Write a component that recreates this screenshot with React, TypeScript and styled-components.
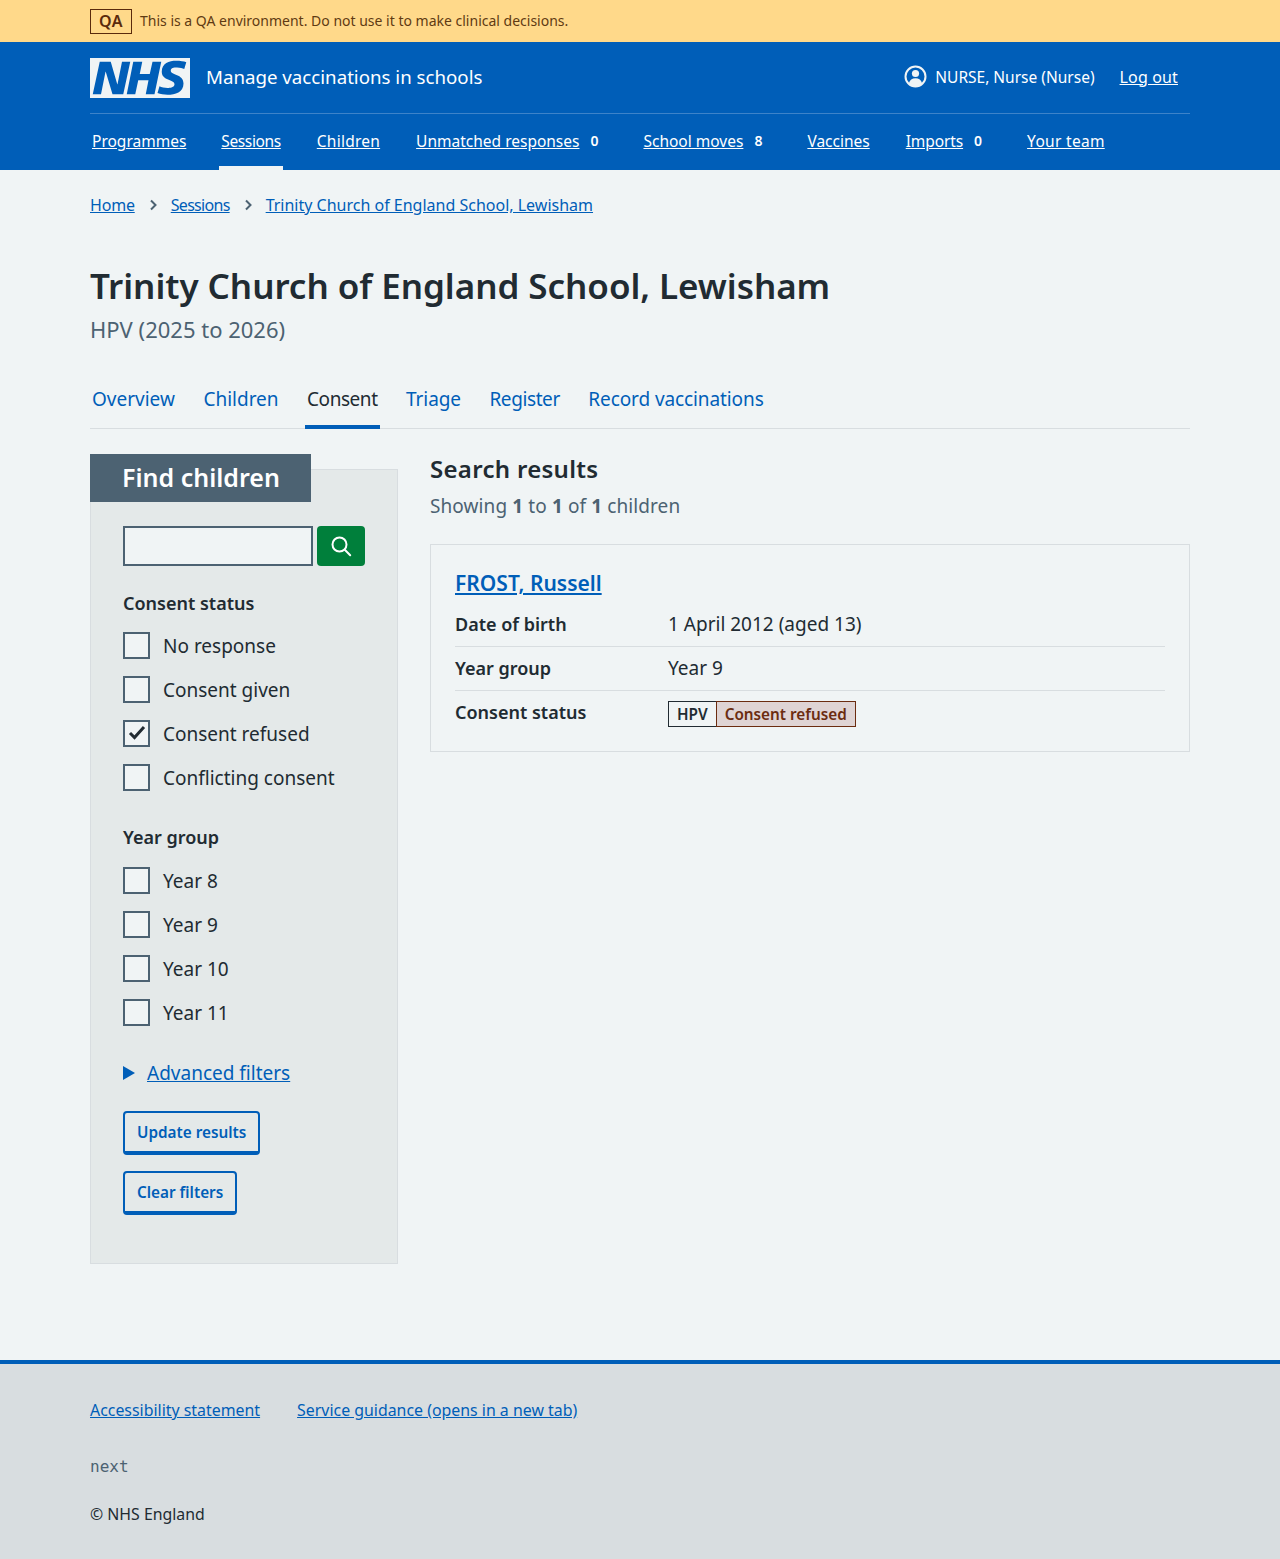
import React from "react";
import styled, { createGlobalStyle } from "styled-components";

const Global = createGlobalStyle`
  html, body { margin: 0; padding: 0; background: #f0f4f5; }
  body { font-family: "Noto Sans", Arial, sans-serif; color: #212b32; font-size: 19px; line-height: 28px; -webkit-font-smoothing: antialiased; }
  * { box-sizing: border-box; }
  a { color: #005eb8; }
`;

const Container = styled.div`
  width: 1100px;
  margin: 0 auto;
`;

const QaBar = styled.div`
  height: 42px;
  background: #ffd98a;
  color: #5f3b13;
`;
const QaInner = styled(Container)`
  display: flex;
  align-items: center;
  gap: 8px;
  height: 42px;
  font-size: 14px;
`;
const QaTag = styled.strong`
  display: block;
  width: 42px;
  height: 25px;
  border: 1px solid #5a2a0c;
  text-align: center;
  line-height: 23px;
  font-size: 16px;
  font-weight: 600;
  letter-spacing: 0.5px;
  color: #5a2a0c;
`;

const Header = styled.header`
  background: #005eb8;
  height: 128px;
  color: #fff;
`;
const HeaderTop = styled(Container)`
  display: flex;
  align-items: center;
  height: 72px;
  border-bottom: 1px solid #3d83c9;
`;
const Logo = styled.svg`
  display: block;
  width: 100px;
  height: 40px;
`;
const ServiceName = styled.span`
  margin-left: 16px;
  padding-bottom: 2px;
  font-size: 18.7px;
`;
const Account = styled.div`
  margin-left: auto;
  display: flex;
  align-items: center;
  padding-right: 12px;
  padding-bottom: 2px;
  font-size: 16px;
`;
const AccountName = styled.span`
  margin-left: 8px;
  margin-right: 25px;
  font-size: 15.5px;
`;
const HeaderLink = styled.a<{ $track?: number }>`
  color: #fff;
  letter-spacing: ${(p) => p.$track ?? 0}px;
`;
const Nav = styled(Container)`
  display: flex;
  height: 56px;
`;
const NavItem = styled.div<{ $active?: boolean; $gap?: number }>`
  display: flex;
  align-items: center;
  height: 56px;
  padding: 2px 2px 0;
  margin-right: ${(p) => p.$gap ?? 32}px;
  font-size: 15.5px;
  border-bottom: 4px solid ${(p) => (p.$active ? "#f0f4f5" : "transparent")};
`;
const NavCount = styled.span`
  margin-left: 11px;
  width: 8px;
  font-size: 14px;
  font-weight: 600;
`;

const Main = styled(Container)`
  height: 1190px;
  padding-top: 23px;
`;
const Breadcrumbs = styled.nav`
  display: flex;
  align-items: center;
  height: 24px;
  font-size: 16px;
`;
const Crumb = styled.a<{ $track?: number }>`
  letter-spacing: ${(p) => p.$track ?? 0}px;
`;
const Chevron = styled.svg`
  width: 8px;
  height: 12px;
  margin: 0 14px;
  color: #4c6272;
`;
const Title = styled.h1`
  margin: 0;
  padding-top: 47px;
  font-size: 35px;
  line-height: 44px;
  font-weight: 600;
  letter-spacing: -0.05px;
`;
const Caption = styled.div`
  margin-top: 5px;
  font-size: 22px;
  line-height: 32px;
  color: #4c6272;
`;
const Tabs = styled.div`
  display: flex;
  margin-top: 30px;
  height: 54px;
  border-bottom: 1px solid #d8dde0;
`;
const Tab = styled.a<{ $active?: boolean; $track?: number }>`
  display: flex;
  align-items: center;
  height: 54px;
  padding: 0 2px 3px;
  margin-right: 24.5px;
  font-size: 19px;
  letter-spacing: ${(p) => p.$track ?? 0}px;
  text-decoration: none;
  color: ${(p) => (p.$active ? "#212b32" : "#005eb8")};
  border-bottom: 4px solid ${(p) => (p.$active ? "#005eb8" : "transparent")};
`;
const Columns = styled.div`
  display: flex;
  gap: 32px;
  margin-top: 25px;
  align-items: flex-start;
`;
const Sidebar = styled.aside`
  position: relative;
  width: 308px;
  height: 795px;
  margin-top: 15px;
  background: #e4e9e9;
  border: 1px solid #d8dde0;
  padding: 56px 32px 0;
`;
const SidebarTitle = styled.h2`
  position: absolute;
  left: -1px;
  top: -16px;
  margin: 0;
  width: 221px;
  height: 48px;
  padding-left: 32px;
  background: #4c6272;
  color: #fff;
  font-size: 25px;
  line-height: 47px;
  font-weight: 600;
`;
const SearchRow = styled.div`
  display: flex;
  gap: 4px;
`;
const SearchInput = styled.div`
  width: 190px;
  height: 40px;
  background: #f0f4f5;
  border: 2px solid #4c6272;
`;
const SearchButton = styled.div`
  display: flex;
  align-items: center;
  justify-content: center;
  width: 48px;
  height: 40px;
  background: #007f3b;
  border-radius: 4px;
  color: #fff;
`;
const GroupLabel = styled.div<{ $raised?: boolean }>`
  margin-top: ${(p) => (p.$raised ? 26 : 23)}px;
  margin-bottom: ${(p) => (p.$raised ? 9 : 8)}px;
  font-weight: 600;
  font-size: 18px;
  line-height: 28px;
`;
const CheckList = styled.div`
  display: flex;
  flex-direction: column;
  gap: 4px;
  margin-bottom: 26px;
`;
const CheckRow = styled.div`
  display: flex;
  align-items: center;
  height: 40px;
`;
const CheckBox = styled.span`
  display: flex;
  align-items: center;
  justify-content: center;
  width: 27px;
  height: 27px;
  background: #f0f4f5;
  border: 2px solid #4c6272;
  color: #212b32;
`;
const CheckLabel = styled.span`
  margin-left: 13px;
  padding-top: 2px;
  font-size: 19px;
`;
const Details = styled.div`
  display: flex;
  align-items: center;
  height: 28px;
  margin-top: 27px;
  margin-bottom: 24px;
  font-size: 19px;
`;
const Triangle = styled.svg`
  width: 12px;
  height: 14px;
  margin-right: 12px;
  color: #005eb8;
`;
const SecondaryButton = styled.div`
  display: table;
  height: 44px;
  padding: 0 12px;
  margin-top: 16px;
  background: transparent;
  border: 2px solid #005eb8;
  border-bottom-width: 4px;
  border-radius: 4px;
  color: #005eb8;
  font-size: 15.3px;
  font-weight: 600;
  line-height: 38px;
`;
const Results = styled.section`
  flex: 1;
`;
const ResultsTitle = styled.h2`
  margin: 0;
  font-size: 24px;
  line-height: 30px;
  font-weight: 600;
  letter-spacing: 0.3px;
`;
const ResultsCount = styled.p`
  margin: 8px 0 0;
  color: #4c6272;
  line-height: 28px;
  letter-spacing: 0.1px;
`;
const Card = styled.div`
  margin-top: 24px;
  height: 208px;
  padding: 24px;
  background: #f0f4f5;
  border: 1px solid #d8dde0;
`;
const CardLink = styled.a`
  display: block;
  margin-bottom: 6px;
  font-size: 21px;
  line-height: 28px;
  font-weight: 600;
`;
const Row = styled.div<{ $last?: boolean }>`
  display: flex;
  height: 44px;
  padding-top: 7px;
  border-bottom: 1px solid ${(p) => (p.$last ? "transparent" : "#d8dde0")};
`;
const RowKey = styled.div`
  width: 213px;
  font-size: 18px;
  font-weight: 600;
`;
const TagGroup = styled.div`
  display: flex;
  height: 26px;
  margin-top: 3px;
`;
const Tag = styled.span<{ $refused?: boolean }>`
  height: 26px;
  padding: 0 8px;
  border: 1px solid ${(p) => (p.$refused ? "#6b2c10" : "#212b32")};
  ${(p) => (p.$refused ? "" : "border-right: 0;")}
  background: ${(p) => (p.$refused ? "#dfd4d4" : "#f0f4f5")};
  color: ${(p) => (p.$refused ? "#6b2c10" : "#212b32")};
  font-size: 15.3px;
  font-weight: 600;
  line-height: 24px;
`;

const Footer = styled.footer`
  height: 199px;
  background: #d8dde0;
  border-top: 4px solid #005eb8;
`;
const FooterLinks = styled.div`
  display: flex;
  gap: 37px;
  padding-top: 34px;
  font-size: 15.9px;
  line-height: 24px;
`;
const Version = styled.div`
  margin-top: 32px;
  font-family: "DejaVu Sans Mono", monospace;
  font-size: 16px;
  line-height: 26px;
  color: #4c6272;
`;
const Copyright = styled.div`
  margin-top: 22px;
  font-size: 15.85px;
  line-height: 24px;
`;

const ChevronIcon = () => (
  <Chevron viewBox="0 0 8 12" fill="none" stroke="currentColor" strokeWidth="2">
    <path d="M2 1.5 6.5 6 2 10.5" />
  </Chevron>
);

const Check = ({ label, checked }: { label: string; checked?: boolean }) => (
  <CheckRow>
    <CheckBox>
      {checked && (
        <svg width="18" height="16" viewBox="0 0 18 16" fill="none" stroke="currentColor" strokeWidth="3">
          <path d="M2 8 6.5 12.5 16 2" />
        </svg>
      )}
    </CheckBox>
    <CheckLabel>{label}</CheckLabel>
  </CheckRow>
);

const navItems: { t: string; c?: string; gap?: number; active?: boolean; track?: number }[] = [
  { t: "Programmes", gap: 31 },
  { t: "Sessions", active: true, track: -0.38 },
  { t: "Children", track: 0.25 },
  { t: "Unmatched responses", c: "0", gap: 41 },
  { t: "School moves", c: "8", gap: 41 },
  { t: "Vaccines" },
  { t: "Imports", c: "0", gap: 41, track: -0.1 },
  { t: "Your team", track: 0.3 },
];
const tabs: { t: string; track?: number }[] = [
  { t: "Overview" },
  { t: "Children" },
  { t: "Consent", track: -0.45 },
  { t: "Triage", track: -0.1 },
  { t: "Register", track: -0.4 },
  { t: "Record vaccinations", track: -0.1 },
];

export default function App() {
  return (
    <>
      <Global />
      <QaBar>
        <QaInner>
          <QaTag>QA</QaTag>
          <span>This is a QA environment. Do not use it to make clinical decisions.</span>
        </QaInner>
      </QaBar>
      <Header>
        <HeaderTop>
          <Logo viewBox="0 0 40 16" preserveAspectRatio="none">
            <path fill="#f0f4f5" d="M0 0h40v16H0z" />
            <path fill="#005eb8" d="M3.9 1.5h4.4l2.6 9h.1l1.8-9h3.3l-2.8 13H9l-2.7-9h-.1l-1.8 9H1.1M17.3 1.5h3.6l-1 4.9h4L25 1.5h3.5l-2.7 13h-3.5l1.1-5.6h-4.1l-1.2 5.6h-3.4M37.7 4.4c-.7-.3-1.6-.6-2.9-.6-1.4 0-2.5.2-2.5 1.3 0 1.8 5.1 1.2 5.1 5.1 0 3.6-3.3 4.5-6.4 4.5-1.3 0-2.9-.3-4-.7l.8-2.7c.7.4 2.1.7 3.2.7s2.8-.2 2.8-1.5c0-2.1-5.1-1.3-5.1-5 0-3.4 2.9-4.4 5.8-4.4 1.6 0 3.1.2 4 .6" />
          </Logo>
          <ServiceName>Manage vaccinations in schools</ServiceName>
          <Account>
            <svg width="23" height="23" viewBox="0 0 23 23">
              <circle cx="11.5" cy="11.5" r="10" fill="none" stroke="#f0f4f5" strokeWidth="2" />
              <circle cx="11.5" cy="8.5" r="3.6" fill="#f0f4f5" />
              <path fill="#f0f4f5" d="M4.8 18.5c.8-3.6 3.4-5.3 6.7-5.3s5.9 1.7 6.7 5.3a9.5 9.5 0 0 1-13.4 0z" />
            </svg>
            <AccountName>NURSE, Nurse (Nurse)</AccountName>
            <HeaderLink href="#" $track={0.15}>
              Log out
            </HeaderLink>
          </Account>
        </HeaderTop>
        <Nav>
          {navItems.map((n) => (
            <NavItem key={n.t} $active={n.active} $gap={n.gap}>
              <HeaderLink href="#" $track={n.track}>
                {n.t}
              </HeaderLink>
              {n.c && <NavCount>{n.c}</NavCount>}
            </NavItem>
          ))}
        </Nav>
      </Header>
      <Main>
        <Breadcrumbs>
          <Crumb href="#" $track={-0.2}>
            Home
          </Crumb>
          <ChevronIcon />
          <Crumb href="#" $track={-0.7}>
            Sessions
          </Crumb>
          <ChevronIcon />
          <Crumb href="#">Trinity Church of England School, Lewisham</Crumb>
        </Breadcrumbs>
        <Title>Trinity Church of England School, Lewisham</Title>
        <Caption>HPV (2025 to 2026)</Caption>
        <Tabs>
          {tabs.map((t) => (
            <Tab key={t.t} href="#" $active={t.t === "Consent"} $track={t.track}>
              {t.t}
            </Tab>
          ))}
        </Tabs>
        <Columns>
          <Sidebar>
            <SidebarTitle>Find children</SidebarTitle>
            <SearchRow>
              <SearchInput />
              <SearchButton>
                <svg width="24" height="24" viewBox="0 0 24 24" fill="none" stroke="currentColor" strokeWidth="2">
                  <circle cx="10.5" cy="10.5" r="7" />
                  <path d="m15.8 15.8 5.4 5.4" strokeLinecap="round" />
                </svg>
              </SearchButton>
            </SearchRow>
            <GroupLabel>Consent status</GroupLabel>
            <CheckList>
              <Check label="No response" />
              <Check label="Consent given" />
              <Check label="Consent refused" checked />
              <Check label="Conflicting consent" />
            </CheckList>
            <GroupLabel $raised>Year group</GroupLabel>
            <CheckList>
              <Check label="Year 8" />
              <Check label="Year 9" />
              <Check label="Year 10" />
              <Check label="Year 11" />
            </CheckList>
            <Details>
              <Triangle viewBox="0 0 12 14">
                <path fill="currentColor" d="M0 0v14l12-7z" />
              </Triangle>
              <a href="#">Advanced filters</a>
            </Details>
            <SecondaryButton>Update results</SecondaryButton>
            <SecondaryButton>Clear filters</SecondaryButton>
          </Sidebar>
          <Results>
            <ResultsTitle>Search results</ResultsTitle>
            <ResultsCount>
              Showing <b>1</b> to <b>1</b> of <b>1</b> children
            </ResultsCount>
            <Card>
              <CardLink href="#">FROST, Russell</CardLink>
              <Row>
                <RowKey>Date of birth</RowKey>
                <div>1 April 2012 (aged 13)</div>
              </Row>
              <Row>
                <RowKey>Year group</RowKey>
                <div>Year 9</div>
              </Row>
              <Row $last>
                <RowKey>Consent status</RowKey>
                <TagGroup>
                  <Tag>HPV</Tag>
                  <Tag $refused>Consent refused</Tag>
                </TagGroup>
              </Row>
            </Card>
          </Results>
        </Columns>
      </Main>
      <Footer>
        <Container>
          <FooterLinks>
            <a href="#">Accessibility statement</a>
            <a href="#">Service guidance (opens in a new tab)</a>
          </FooterLinks>
          <Version>next</Version>
          <Copyright>© NHS England</Copyright>
        </Container>
      </Footer>
    </>
  );
}
